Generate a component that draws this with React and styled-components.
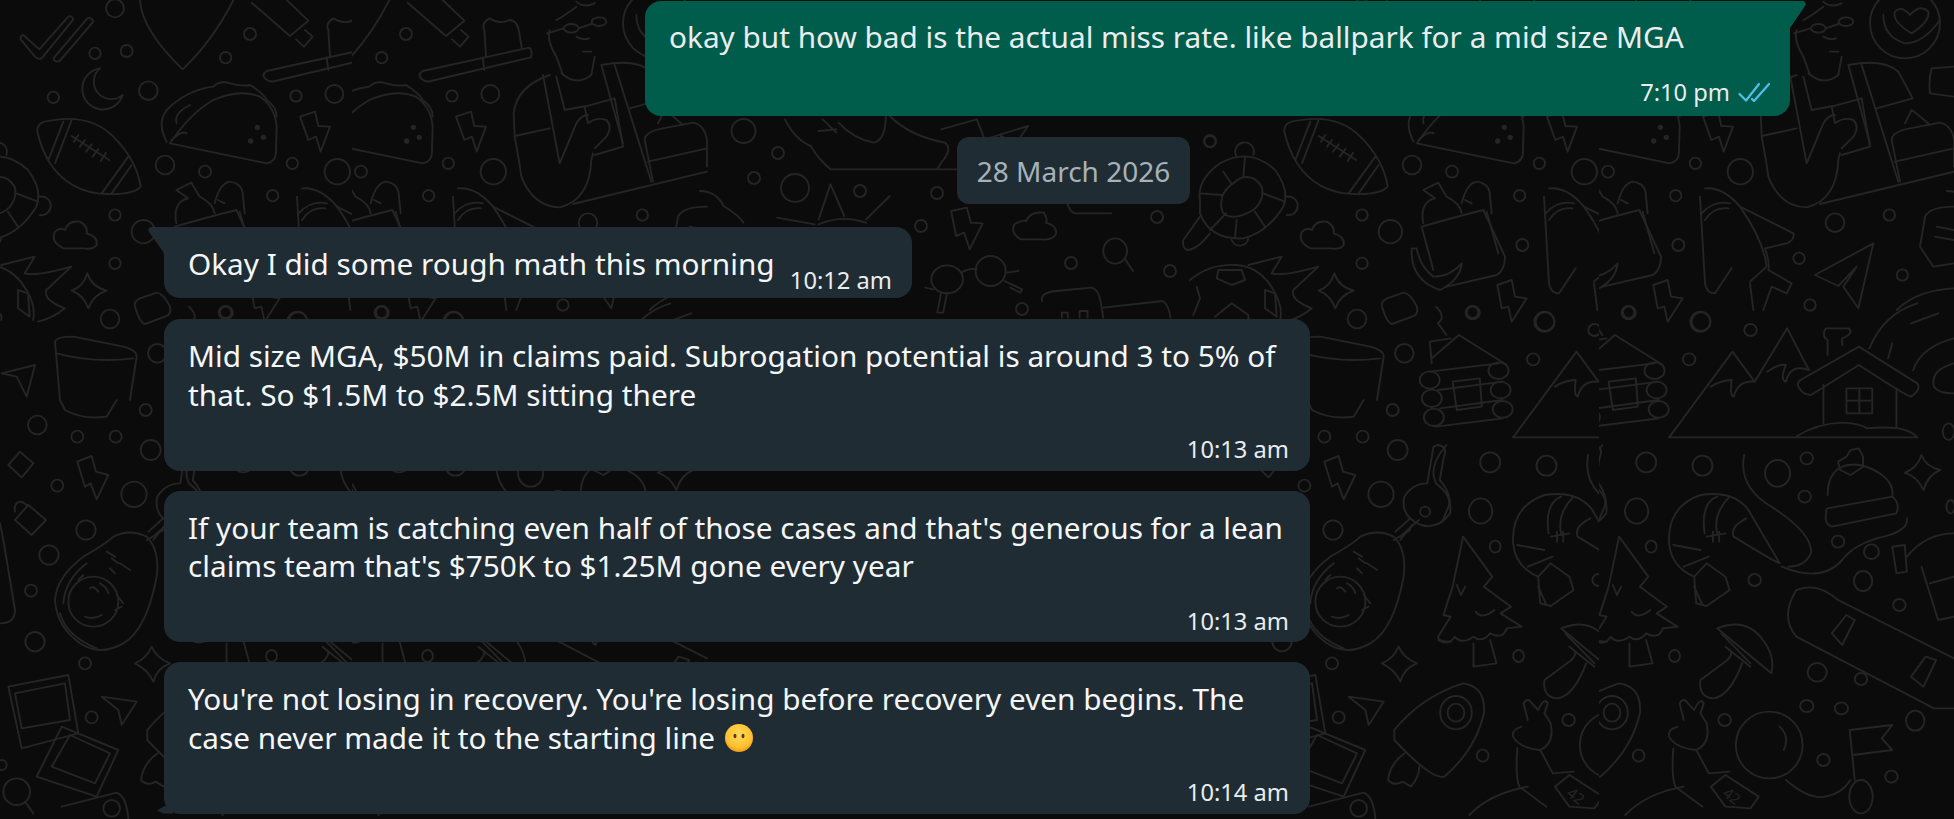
import React from 'react';
import styled, { createGlobalStyle } from 'styled-components';

const GlobalStyle = createGlobalStyle`
  html, body {
    margin: 0;
    padding: 0;
    background: #0b0b0b;
  }
`;

const Page = styled.div`
  position: relative;
  width: 1954px;
  height: 819px;
  overflow: hidden;
  background: #0b0b0b;
  font-family: "Noto Sans", "Open Sans", sans-serif;
`;

const Wallpaper = styled.svg`
  position: absolute;
  top: 0;
  left: 0;
`;

const DoodleLines = styled.g`
  fill: none;
  stroke: #252525;
  stroke-width: 1.9;
  stroke-linecap: round;
  stroke-linejoin: round;

  path, circle, ellipse, rect {
    vector-effect: non-scaling-stroke;
  }
`;

const DoodleDot = styled.circle`
  fill: #252525;
  stroke: none;
`;

const BadgeText = styled.text`
  font-family: "Noto Sans", sans-serif;
  font-size: 15px;
  fill: #252525;
  stroke: none;
`;

const Chat = styled.main`
  position: relative;
  display: flex;
  flex-direction: column;
  align-items: flex-start;
  padding-top: 1px;
`;

const Bubble = styled.div`
  position: relative;
  box-sizing: border-box;
  width: ${(p) => p.$width || 'fit-content'};
  margin-left: ${(p) => (p.$out ? '645px' : '164px')};
  margin-top: ${(p) => p.$top ?? 20}px;
  padding: ${(p) => (p.$out ? '17px 20px 9.5px 24px' : '18px 21px 6.5px 24px')};
  background: ${(p) => (p.$out ? '#005c4b' : '#202c33')};
  color: ${(p) => (p.$out ? '#e9edef' : '#f4f6f7')};
  border-radius: 16px;
  border-top-left-radius: ${(p) => (p.$tail === 'left' ? 0 : 16)}px;
  border-top-right-radius: ${(p) => (p.$tail === 'right' ? 0 : 16)}px;

  ${(p) => p.$tail === 'left' && `
    &::before {
      content: '';
      position: absolute;
      top: 0;
      left: -16px;
      width: 16px;
      height: 26px;
      background: #202c33;
      clip-path: path('M16 0 H3 Q-1 1 1 5 L16 26 Z');
    }
  `}

  ${(p) => p.$tail === 'right' && `
    &::before {
      content: '';
      position: absolute;
      top: 0;
      right: -16px;
      width: 16px;
      height: 27px;
      background: #005c4b;
      clip-path: path('M0 0 H13 Q17 1 15 5 L0 27 Z');
    }
  `}

  ${(p) => p.$nib && `
    &::after {
      content: '';
      position: absolute;
      left: -7px;
      bottom: 0;
      width: 16px;
      height: 12px;
      background: #202c33;
      clip-path: polygon(100% 0, 0 72%, 40% 100%, 100% 100%);
    }
  `}
`;

const MessageText = styled.div`
  font-size: 29.75px;
  line-height: 38.5px;
`;

const MetaRow = styled.div`
  display: flex;
  justify-content: flex-end;
  align-items: center;
  gap: 8px;
  height: 30px;
  margin-top: 20px;
`;

const Time = styled.span`
  font-size: 23.7px;
  line-height: 30px;
  color: #e9edef;
`;

const InlineRow = styled.div`
  display: flex;
  justify-content: space-between;
  height: 46.5px;
`;

const InlineTime = styled(Time)`
  align-self: flex-end;
  position: relative;
  top: 3px;
  margin-right: -1px;
`;

const DatePill = styled.div`
  margin: 21px 0 0 957px;
  width: 233px;
  height: 67px;
  display: flex;
  align-items: center;
  justify-content: center;
  border-radius: 12px;
  background: #202c33;
  color: #a6b2ba;
  font-size: 28px;
`;

const EmojiIcon = styled.svg`
  display: inline-block;
  vertical-align: -3px;
  margin-left: 2px;
`;

const TicksIcon = () => (
  <svg width="32" height="20" viewBox="0 0 32 20" fill="none" stroke="#53bdeb" strokeWidth="2.2" strokeLinecap="round" strokeLinejoin="round">
    <path d="M1.5 12 L8 18.5 L21 2 M14 17 L16 19 L31 2" />
  </svg>
);

const NoMouthEmoji = () => (
  <EmojiIcon width="28" height="28" viewBox="0 0 28 28">
    <defs>
      <radialGradient id="faceFill" cx="50%" cy="38%" r="65%">
        <stop offset="0%" stopColor="#ffd95c" />
        <stop offset="70%" stopColor="#ffc130" />
        <stop offset="100%" stopColor="#f08f12" />
      </radialGradient>
    </defs>
    <circle cx="14" cy="14" r="14" fill="url(#faceFill)" />
    <ellipse cx="10" cy="12" rx="1.5" ry="2.2" fill="#5a3a12" />
    <ellipse cx="18" cy="12" rx="1.5" ry="2.2" fill="#5a3a12" />
  </EmojiIcon>
);

// doodles, grouped by the frame they were traced in
const leftColumnLines = [
  'M62 118 Q60 108 70 105 L118 148 L205 50 Q215 45 220 58 L125 175 Q115 180 105 170 Z',
  'M160 175 L262 55 Q275 50 280 65 L180 182 Q165 190 160 175 Z',
  'M300 205 A62 62 0 1 0 368 285 A52 52 0 0 1 300 205 Z',
  'M420 0 Q425 90 548 208 Q640 120 700 0',
  'M755 8 L870 108 L925 62 L860 0',
  'M888 118 L912 140 L938 110 L915 90',
  'M800 213 L1120 143 Q1130 150 1125 172 L825 243 Q810 248 798 238 Q782 225 800 213 Z',
  'M980 172 L985 210',
  'M990 170 L985 90 Q975 70 1000 55 Q1030 75 1060 60 Q1085 60 1090 100 L1098 148',
  'M112 395 Q110 365 150 362 Q270 340 340 410 Q410 480 422 560 Q400 585 320 582 Q210 580 150 490 Q125 450 112 395 Z',
  'M190 365 L145 480 M215 360 L165 490 M385 470 L305 580 M395 495 L335 580',
  'M215 408 L328 480 M235 405 L222 425 M255 420 L240 440 M275 433 L258 455 M295 447 L278 470 M318 458 L302 483',
  'M510 430 L800 490 Q830 485 828 450 L830 380 Q825 320 780 290 Q720 265 640 300 Q570 340 510 430 Z',
  'M500 425 Q470 370 500 330 Q560 270 640 260 Q660 240 690 250 Q730 260 750 255 Q790 280 800 300 Q830 320 830 350',
  'M515 420 Q545 390 560 400 M530 370 Q520 340 570 315',
  'M900 350 L945 335 L955 378 L990 380 L962 455 L948 410 L925 420 Z',
  'M190 745 Q150 725 165 695 Q180 680 195 690 Q205 660 240 665 Q265 680 260 700 Q295 710 290 735 Q280 750 250 745 Z',
  'M262 820 Q275 860 320 872 Q280 885 265 925 Q250 885 215 872 Q250 860 262 820 Z',
  'M405 920 Q400 905 420 895 L470 878 Q490 880 510 920 Q515 945 495 950 L435 972 Q420 970 405 920 Z',
  'M165 1025 Q170 1010 220 1010 L370 1040 Q410 1050 410 1070 L390 1200 M165 1025 L180 1200 M170 1060 Q280 1090 400 1075',
  'M5 1120 L105 1095 L80 1190 L50 1130 Z',
];
const leftColumnCircles = [
  [345, 25, 27], [285, 160, 17], [380, 153, 18], [445, 272, 28], [160, 292, 17], [495, 495, 28],
  [615, 515, 18], [345, 645, 17], [430, 695, 35], [345, 790, 17], [330, 957, 28], [472, 1060, 28],
  [750, 102, 18], [677, 173, 17], [888, 288, 17], [1003, 282, 27], [877, 490, 17], [1012, 515, 38],
  [818, 587, 17], [826, 735, 18], [677, 937, 17], [894, 965, 28],
];

const turtleLines = [
  'M30 600 Q20 540 90 490 Q180 440 255 510 Q300 570 280 620 Q230 700 160 715 Q60 720 30 640 Z',
  'M95 600 Q95 570 150 535 Q190 520 215 560 Q225 600 190 630 Q130 665 100 640 Q90 620 95 600 Z',
  'M100 515 L125 552 M165 470 L160 530 M220 580 L285 605 M140 660 L135 715 M30 580 L95 585 M60 690 L108 640 M195 635 L225 680',
  'M140 470 A28 28 0 1 1 190 465 M290 590 A28 28 0 1 1 290 645 M125 720 A26 26 0 0 0 175 715',
  'M60 700 Q20 750 -10 750 Q-25 740 -20 720 L30 650',
  'M0 840 Q60 790 140 795 Q210 800 250 870 Q280 920 270 960',
  'M85 810 L155 810 L165 840 L125 855 L80 835 Z',
  'M225 870 L255 880 L260 950 L225 925 Z',
  'M20 860 L30 895 L10 945 M75 950 L125 910 L175 945 L175 960',
  'M175 795 L275 770 L245 820 Q280 830 385 800 L310 870 Q300 900 365 925 Q330 955 285 965',
  'M695 680 Q800 650 880 630 L945 770 Q945 810 920 825 L770 860',
  'M700 670 Q690 620 720 600 L735 595 L700 570 L745 548 L770 590 Q810 610 815 640',
  'M815 610 Q830 550 860 545 Q900 550 900 590 L905 640 M825 600 L845 610 M890 635 L925 760 M695 680 L730 810',
  'M665 745 Q660 840 750 870 Q810 840 815 790 Q780 830 730 830 Q690 800 680 745 Z',
  'M922 855 L965 840 L975 890 L1010 895 L965 965 L955 920 L935 925 Z',
];

const centerLines = [
  'M215 10 Q240 70 280 90 Q300 130 330 160 L650 160 M310 10 L345 50 M300 45 L345 40',
  'M470 0 Q470 70 440 80 Q390 70 350 20 M480 0 Q530 60 620 80 Q640 100 610 140 Q600 160 600 160',
  'M610 40 L700 10 L720 70 M720 70 L830 30 L800 80 L760 60',
  'M330 205 L365 300 M330 205 L300 310 M195 305 L290 325 M480 240 L420 310 M300 325 Q360 295 420 320',
  'M0 225 Q40 225 60 270 Q100 300 110 320',
  'M635 285 L675 275 L685 320 L715 322 L682 400 L668 350 L648 360 Z',
  'M810 370 Q785 350 795 325 Q815 310 825 315 Q835 285 870 290 Q880 310 875 320 Q905 330 900 355 Q890 375 860 370 Z',
  'M660 470 Q680 455 700 460 M775 470 L805 465 M770 495 L815 520 L810 530 L785 515 M610 530 L600 590 L615 590 L625 530 M570 515 L590 520',
  'M1075 430 L1095 465',
  'M865 555 Q860 530 900 525 L990 515 Q1010 520 1015 570 L1020 605',
  'M915 605 L915 590 L930 590 L930 605 M960 605 L960 585 L980 585 L980 605 M1020 575 L1170 555 Q1185 565 1190 605',
  'M930 265 Q935 290 950 292 L1040 292',
];
const centerEllipses = [[625, 490, 40, 42], [735, 465, 38, 45], [1050, 405, 30, 38]];
const centerCircles = [
  [743.5, 131, 12], [778, 153, 6], [754, 178, 6], [795, 188, 14], [860, 191, 6], [937, 193, 6],
  [1210, 141, 6], [1157, 217, 6], [921, 226, 6], [1071, 263, 6], [1170, 271, 6], [1022, 309, 6],
];

const personLines = [
  'M620 225 Q520 260 512 340 L515 410 Q530 490 535 530 Q570 620 650 622 Q740 600 745 480 L750 460',
  'M515 408 L620 385 M600 225 L650 490 L700 370 Q715 345 735 345 M640 230 L665 330 L730 318',
  'M725 320 L815 295 L840 440 L755 465 M725 320 L735 370 Q760 350 790 360 Q810 380 790 410 L755 445',
  'M655 220 Q700 260 745 225 L755 170 M620 90 Q610 120 640 170 L660 225 M700 5 Q720 25 755 10 M640 60 Q660 50 700 20',
  'M707 85 L745 72 M612 100 L662 85 M700 110 Q720 122 738 115 M720 155 Q740 155 745 155',
  'M775 195 Q880 175 925 215 Q960 280 968 295 L860 325 M775 195 L840 430 M815 195 L925 545',
  'M690 612 L1092 515',
  'M905 420 Q905 395 960 385 L1050 368 Q1085 375 1092 420 L1092 500 M915 485 L1092 445 M945 370 L965 330 Q980 340 1020 375 M905 420 L930 545',
  'M880 45 Q880 110 945 130 Q1000 130 1050 60',
  'M960 45 Q935 15 915 35 Q905 65 965 100 Q1020 65 1015 35 Q990 10 960 45 Z',
  'M1092 200 L1025 205 Q1015 240 1020 280 L1092 290',
  'M1092 620 Q1020 620 1005 650 L990 740 L1030 800 L1092 790 M1040 680 L1092 690 M1035 710 L1092 720',
  'M920 930 Q980 870 1092 865',
  'M345 565 Q400 560 450 620 L610 700 Q615 720 590 730 L525 745 Q540 790 535 810 L605 850 L590 880 L545 860 L520 930',
  'M450 620 Q520 720 530 800 L480 845 M330 590 L345 850 Q350 880 375 880 L425 805 M335 640 Q370 600 420 610 M345 660 Q370 620 415 625 M480 850 L490 930',
  'M675 825 L850 730 L805 925 L760 860 L800 800 L745 858 Z',
];
const personEllipses = [[685, 85, 22, 13], [768, 65, 22, 13], [945, 70, 105, 105]];
const personCircles = [[735, 668, 28], [898, 645, 17], [627, 775, 17], [937, 825, 17], [660, 915, 17]];

const rightSideLines = [
  'M690 175 L755 105 L870 195 M685 125 L735 115 M685 125 L690 190 M700 20 Q725 50 705 70 L725 105',
  'M685 215 L850 190 M705 270 L860 245 M710 325 L860 300 M700 380 L860 355 M740 245 L805 235 L810 320 L750 330 Z',
  'M885 412 L1037 155 L1090 245 L1168 85 L1220 210 M885 412 L1480 412',
  'M985 260 Q1010 240 1035 240 Q1030 290 1040 290 Q1050 240 1090 245 M1120 215 Q1150 190 1165 195 Q1150 240 1165 245 Q1175 190 1220 210',
  'M1195 260 Q1190 250 1200 240 L1340 140 L1480 250 Q1490 270 1465 290 Q1450 285 1340 195 L1225 285 Q1205 285 1195 260 Z',
  'M1255 255 L1255 370 M1430 265 L1430 380 M1265 165 L1265 120 Q1250 110 1260 85 L1315 85 Q1330 100 1300 115 L1300 135',
  'M1310 265 H1372 V340 H1310 Z M1341 265 V340 M1310 302 H1372',
  'M1190 410 Q1240 370 1300 368 Q1340 370 1360 385 Q1400 380 1435 385 Q1470 395 1480 412',
  'M1365 145 Q1400 40 1480 10 M1420 130 L1410 175 M1470 210 Q1490 140 1568 115 M1465 70 L1530 40 M1568 190 Q1510 210 1520 260 Q1530 280 1568 280',
  'M1265 585 Q1265 520 1300 500 Q1340 480 1390 520 Q1425 550 1420 590',
  'M1265 625 L1420 590 Q1440 610 1430 640 L1275 680 Q1255 670 1262 640 Q1260 625 1265 625 Z',
  'M1290 485 L1310 470 L1320 450 L1340 445 L1350 470 L1350 500 L1320 525 L1295 510 Z',
  'M1490 465 Q1500 500 1535 510 Q1505 525 1495 570 Q1480 530 1450 518 Q1480 505 1490 465 Z',
  'M885 730 Q880 620 960 585 Q1040 570 1075 630 L1150 790 Q1130 780 1040 710 Q1030 680 1070 655',
  'M1000 590 Q960 610 970 700 M1030 590 Q990 640 1000 700',
  'M885 730 Q890 800 945 830 L950 910 L975 918 L1030 870 L1020 830 L975 790 M945 830 L975 790 M945 860 L965 915',
  'M975 710 L1020 700 M990 695 L990 725 M1005 695 L1005 725 M895 735 L960 750 M920 800 L980 770',
  'M1065 465 Q1050 560 1130 620 Q1230 700 1225 760 Q1210 800 1170 800',
  'M1155 800 Q1250 850 1300 780 Q1330 730 1400 710 Q1460 690 1455 655',
  'M765 710 L835 830 L815 860 L880 920 L855 940 L905 980',
  'M735 1025 Q705 1025 705 1010 L735 950 L718 945 L740 860 L765 710',
  'M790 1030 L790 1100 L845 1090 L830 1020 M750 855 L760 885 L770 860 M795 935 Q810 960 840 930',
  'M705 1020 Q730 1040 745 1010 Q760 1035 790 1010 Q810 1030 830 1000 Q860 1020 870 985 L905 980',
  'M1000 985 Q1070 950 1110 1020 Q1140 1070 1130 1120 L1000 985 Z',
  'M1030 1050 Q1040 1060 1025 1080 L960 1140 Q955 1190 990 1195 Q1030 1190 1060 1090 M1010 1000 L1080 1090 M1020 1040 L1080 1100',
  'M1190 870 Q1240 845 1290 900 L1568 1075 M1190 870 Q1150 950 1190 1010 L1520 1225 L1568 1225',
  'M1275 1000 L1310 945 L1330 960 L1300 1035 Z M1465 1130 L1500 1070 L1525 1080 L1495 1160 Z',
  'M1420 740 L1450 735 L1455 815 L1430 820 Z M1455 770 Q1500 700 1568 700 M1490 800 L1530 960 L1568 950 M1510 850 L1568 830',
  'M905 1280 Q880 1290 885 1310 Q900 1345 950 1350 Q985 1330 975 1270 L960 1240 L968 1210 Q960 1190 945 1230 L930 1210 Q920 1190 910 1210 L920 1260',
  'M895 1345 Q890 1430 900 1460 L965 1520 M950 1350 L980 1420 L1030 1415',
  'M985 1460 L1020 1425 L1100 1490 L1080 1525 L1020 1520 Z',
  'M1150 1280 Q1175 1310 1160 1350 M1165 1440 Q1220 1500 1260 1490 Q1300 1480 1320 1440',
  'M1318 1290 L1420 1275 L1395 1315 L1420 1350 L1325 1365 M1318 1290 L1330 1440',
  'M600 1290 Q665 1190 765 1150 Q820 1160 815 1240 Q795 1350 720 1430 Q690 1440 600 1320 Z',
  'M625 1360 Q590 1390 585 1440 Q600 1460 620 1445 L640 1460 Q660 1430 660 1400',
  'M780 1545 Q830 1480 920 1460',
  'M725 435 Q680 500 700 550 Q740 590 730 620 L715 665',
];
const rightSideEllipses = [
  [685, 240, 24, 26], [690, 295, 24, 26], [695, 352, 24, 26], [850, 212, 24, 25], [855, 270, 24, 25], [860, 328, 24, 25],
  [960, 65, 24, 30], [788, 38, 17, 20], [1080, 90, 15, 18], [933, 178, 15, 18], [830, 487, 24, 30], [965, 497, 24, 30],
  [1145, 520, 30, 40], [1215, 475, 15, 18], [1210, 590, 15, 18], [807, 633, 28, 38], [842, 740, 13, 18], [1290, 725, 15, 18],
  [1370, 755, 18, 22], [1090, 840, 15, 18], [1350, 843, 22, 30], [1437, 915, 15, 18], [1240, 1117, 23, 28], [1345, 1137, 15, 18],
  [898, 1068, 13, 18], [1215, 1218, 16, 18], [1298, 1225, 16, 18], [1475, 1262, 22, 30], [1018, 1260, 15, 18], [1255, 1380, 15, 18],
  [1418, 1430, 15, 18], [812, 1367, 14, 18], [1555, 395, 14, 25], [1560, 620, 10, 20],
  [748, 1238, 38, 50], [748, 1238, 20, 27], [1125, 1335, 80, 100], [1345, 1490, 28, 50],
];

const lowerLeftLines = [
  'M180 0 L195 30 Q250 60 320 50 L350 0',
  'M25 195 L60 155 L100 190 L65 232 Z',
  'M45 360 L95 405 L138 360 L85 315 Z M45 335 Q40 305 65 305 L85 318',
  'M232 185 L275 168 L288 215 L325 225 L290 298 L272 250 L255 260 Z',
  'M165 600 Q170 530 250 470 Q320 430 340 410 Q390 385 440 410 Q480 450 470 530 Q440 690 370 730 Q300 770 240 730 Q170 680 165 600 Z',
  'M190 610 Q195 540 260 490 M180 640 Q200 710 290 745',
  'M235 540 L250 525 M350 585 L370 610 M345 630 L365 620 M270 565 Q280 555 295 575 M300 550 Q320 560 325 580 M255 650 Q280 660 305 645',
  'M320 455 L345 470 M335 475 L355 490 M360 490 L390 510 M330 505 L345 520',
  'M445 395 L490 355 M460 420 L495 375',
  'M455 740 Q470 775 510 790 Q470 805 460 845 Q445 810 405 790 Q440 775 455 740 Z',
  'M305 890 L410 905 L365 975 L355 930 Z',
  'M25 860 L205 825 L235 1000 L65 1045 Z M45 880 L195 850 L210 960 L65 985 Z',
  'M185 980 L355 1050 L290 1190 L110 1130 Z M210 1005 L330 1060 L285 1150 L155 1100 Z',
  'M75 1205 L100 1240',
  'M185 1220 L350 1178 Q380 1190 385 1257',
  'M0 370 L10 420 L45 630 Q45 670 0 670',
];
const lowerLeftCircles = [
  [112, 75, 28], [232, 110, 18], [347, 110, 18], [437, 30, 18], [452, 150, 30], [172, 257, 18], [402, 283, 38],
  [258, 390, 29], [147, 465, 29], [93, 572, 18], [105, 725, 29], [255, 790, 18], [275, 952, 18], [50, 1175, 40],
  [335, 1225, 25], [5, 1095, 15], [280, 605, 75],
];

const keyLines = [
  'M330 435 Q355 440 345 470 L335 540 Q365 580 360 640 Q330 690 290 675 Q240 650 250 590 Q270 550 305 550 L320 440 Z',
  'M285 660 L240 710 M265 690 L225 720',
];

const Frame = ({ x, y, sx = 1 / 3, sy = 1 / 3, lines = [], circles = [], ellipses = [], children }) => (
  <g transform={`translate(${x} ${y}) scale(${sx} ${sy})`}>
    {lines.map((d) => <path key={d} d={d} />)}
    {circles.map(([cx, cy, r]) => <circle key={`${cx}-${cy}`} cx={cx} cy={cy} r={r} />)}
    {ellipses.map(([cx, cy, rx, ry]) => <ellipse key={`${cx}-${cy}-${rx}`} cx={cx} cy={cy} rx={rx} ry={ry} />)}
    {children}
  </g>
);

const TILE_WIDTH = 1247;
const PERIOD = 1091;
const tileOffsets = [352 - TILE_WIDTH, 352, 352 + TILE_WIDTH];

const ChatWallpaper = () => (
  <Wallpaper width="1954" height="819" viewBox="0 0 1954 819" aria-hidden="true">
    <defs>
      <DoodleLines id="doodles" transform="translate(-352 0)">
        <Frame x={1247} y={0} lines={leftColumnLines} circles={leftColumnCircles}>
          <DoodleDot cx="772" cy="382" r="8" />
          <DoodleDot cx="790" cy="412" r="8" />
          <DoodleDot cx="752" cy="423" r="8" />
        </Frame>
        <Frame x={1190} y={0} lines={turtleLines} circles={[[60, 425, 17]]} />
        <Frame x={700} y={116} sx={620 / 1568} lines={centerLines} ellipses={centerEllipses} />
        <Frame x={0} y={0} sx={1} sy={1} circles={centerCircles} />
        <Frame x={343} y={0} lines={personLines} circles={personCircles} ellipses={personEllipses} />
        <Frame x={53} y={300} sx={654 / 1568} lines={rightSideLines} ellipses={rightSideEllipses} />
        <Frame x={1247} y={400} lines={lowerLeftLines} circles={lowerLeftCircles} />
        <Frame x={1300} y={300} sx={654 / 1568} lines={keyLines} ellipses={[[300, 635, 12, 15]]} />
        <BadgeText x="476" y="803" transform="rotate(38 487 797)">42</BadgeText>
      </DoodleLines>
    </defs>
    {tileOffsets.map((tx) => (
      <svg key={tx} x={tx} y="0" width={TILE_WIDTH} height="819" viewBox={`0 0 ${TILE_WIDTH} 819`}>
        <use href="#doodles" x={-PERIOD} />
        <use href="#doodles" />
        <use href="#doodles" x={PERIOD} />
      </svg>
    ))}
  </Wallpaper>
);

const App = () => (
  <Page>
    <GlobalStyle />
    <ChatWallpaper />
    <Chat>
      <Bubble $out $tail="right" $top={0} $width="1145px">
        <MessageText>okay but how bad is the actual miss rate. like ballpark for a mid size MGA</MessageText>
        <MetaRow>
          <Time>7:10 pm</Time>
          <TicksIcon />
        </MetaRow>
      </Bubble>

      <DatePill>28 March 2026</DatePill>

      <Bubble $tail="left" $top={23} $width="748px">
        <InlineRow>
          <MessageText>Okay I did some rough math this morning</MessageText>
          <InlineTime>10:12 am</InlineTime>
        </InlineRow>
      </Bubble>

      <Bubble $top={21} $width="1146px">
        <MessageText>Mid size MGA, $50M in claims paid. Subrogation potential is around 3 to 5% of that. So $1.5M to $2.5M sitting there</MessageText>
        <MetaRow>
          <Time>10:13 am</Time>
        </MetaRow>
      </Bubble>

      <Bubble $width="1146px">
        <MessageText>If your team is catching even half of those cases and that's generous for a lean claims team that's $750K to $1.25M gone every year</MessageText>
        <MetaRow>
          <Time>10:13 am</Time>
        </MetaRow>
      </Bubble>

      <Bubble $width="1146px" $nib>
        <MessageText>
          You're not losing in recovery. You're losing before recovery even begins. The case never made it to the starting line <NoMouthEmoji />
        </MessageText>
        <MetaRow>
          <Time>10:14 am</Time>
        </MetaRow>
      </Bubble>
    </Chat>
  </Page>
);

export default App;
